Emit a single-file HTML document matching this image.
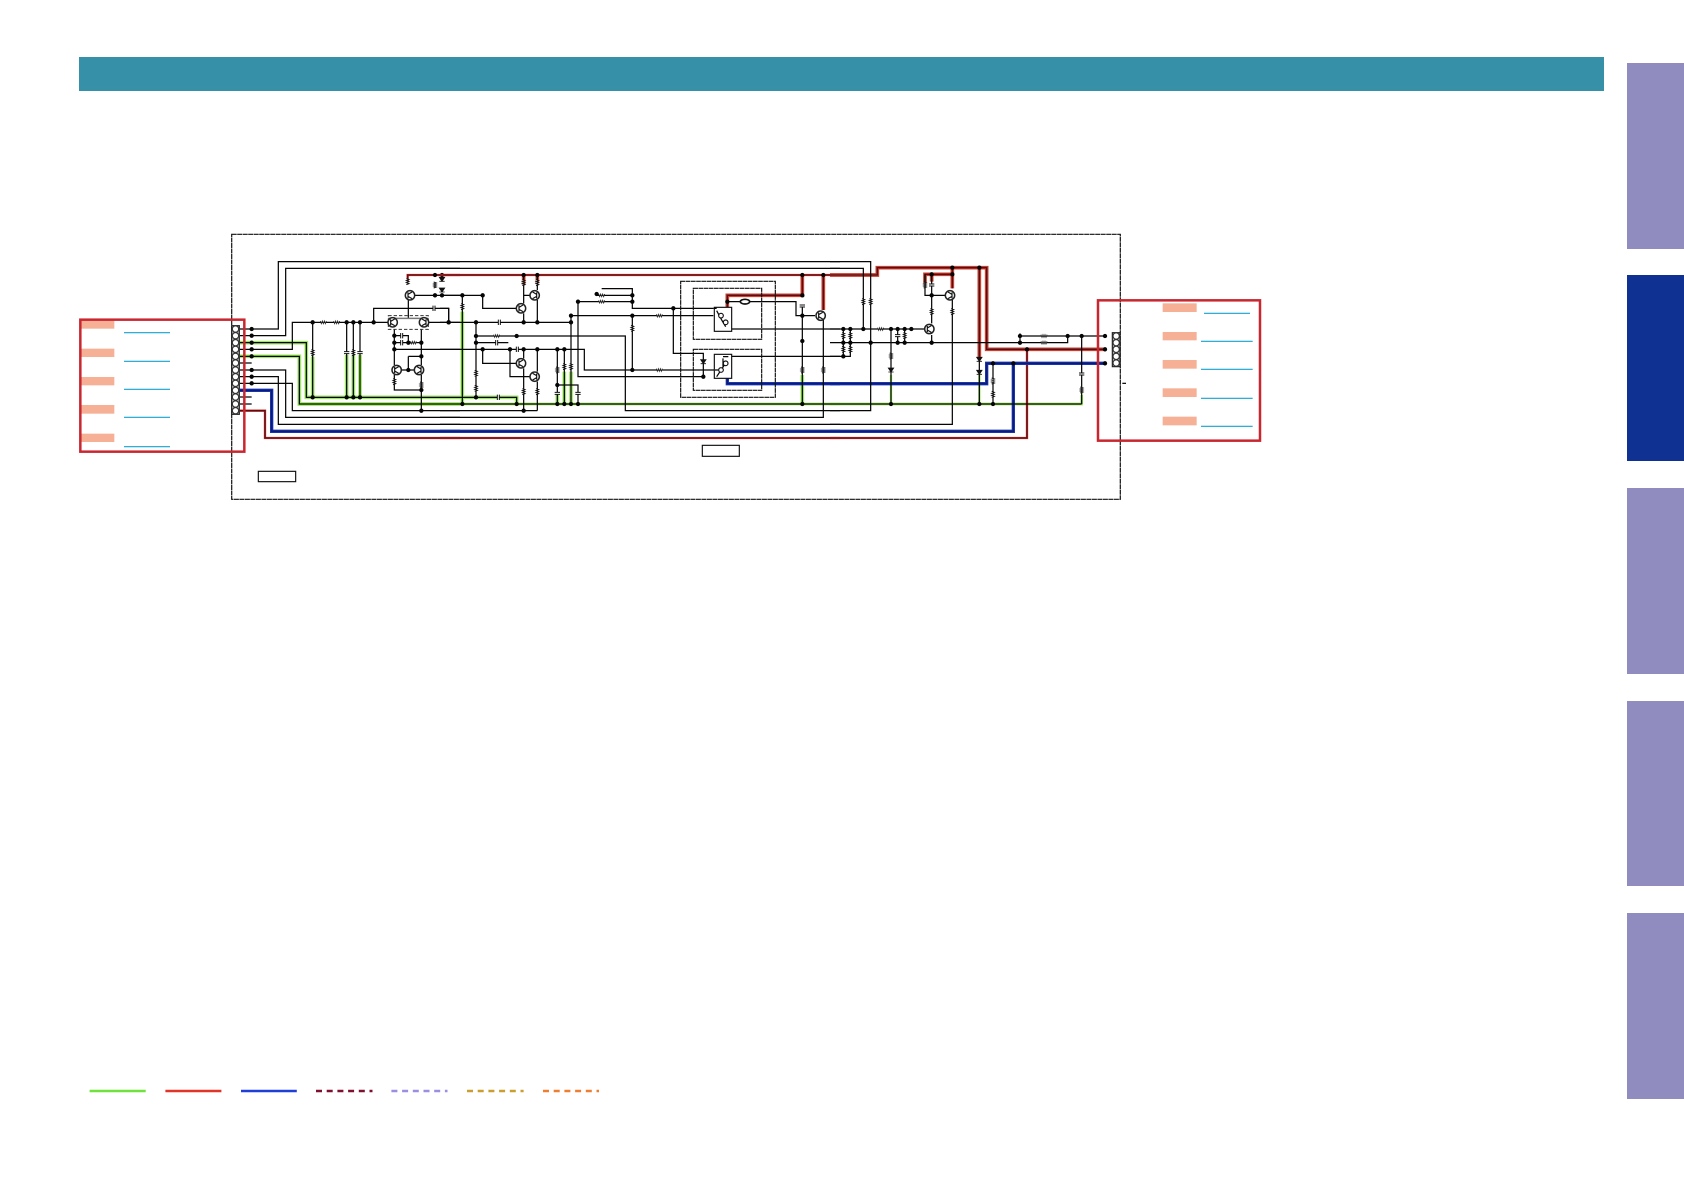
<!DOCTYPE html>
<html><head><meta charset="utf-8"><title>Schematic</title>
<style>
html,body{margin:0;padding:0;background:#fff}
body{width:1684px;height:1191px;overflow:hidden}
svg{display:block}
.k{fill:none;stroke:#050505;stroke-width:3.700}
.g{fill:none;stroke:#9be95f;stroke-width:11}
.gt{fill:none;stroke:#9be95f;stroke-width:8}
.r{fill:none;stroke:#cf3430;stroke-width:7}
.rt{fill:none;stroke:#c8402f;stroke-width:11}
.rc{fill:none;stroke:#5a0d12;stroke-width:4}
.b{fill:none;stroke:#1b38b8;stroke-width:10}
.bc{fill:none;stroke:#0a1c78;stroke-width:5}
.d{fill:none;stroke:#050505;stroke-width:13;stroke-linecap:round}
.sb{fill:none;stroke:#c9262f;stroke-width:7.500}
.sal{fill:#f5b096}
.ln{fill:none;stroke:#14a3cf;stroke-width:3.500}
</style></head>
<body>
<svg width="1684" height="1191" viewBox="0 0 1684 1191" xmlns="http://www.w3.org/2000/svg">
<defs>
<g id="t"><circle r="14" fill="#fff" stroke="#222" stroke-width="4.500"/><path d="M-6-9V9M-6-3 6-10M-6 3 6 10" fill="none" stroke="#111" stroke-width="3.500"/></g>
<path id="rv" d="M-4-9 4-6-4-3 4 0-4 3 4 6-4 9" fill="#fff" stroke="#111" stroke-width="3"/>
<path id="rh" d="M-9-4-6 4-3-4 0 4 3-4 6 4 9-4" fill="#fff" stroke="#222" stroke-width="2.500"/>
<g id="cv"><rect x="-8" y="-3" width="16" height="6" fill="#fff"/><path d="M-8-3H8M-8 3H8" stroke="#111" stroke-width="3"/></g>
<g id="ch"><rect x="-3" y="-8" width="6" height="16" fill="#fff"/><path d="M-3-8V8M3-8V8" stroke="#111" stroke-width="3"/></g>
<path id="dv" d="M-8-6H8L0 6ZM-8 6H8" fill="#111" stroke="#111" stroke-width="2.500"/>
<g id="s"><circle r="7" fill="#fff" stroke="#111" stroke-width="3.500"/></g>
</defs>

<rect x="79" y="57" width="1525" height="34" fill="#3690a8"/>
<rect x="1627" y="63" width="57" height="186" fill="#918cc0"/>
<rect x="1627" y="275" width="57" height="186" fill="#0f3191"/>
<rect x="1627" y="488" width="57" height="186" fill="#918cc0"/>
<rect x="1627" y="701" width="57" height="185" fill="#918cc0"/>
<rect x="1627" y="913" width="57" height="186" fill="#918cc0"/>

<rect x="231.700" y="234.300" width="888.600" height="265" fill="none" stroke="#111" stroke-width="1.200" stroke-dasharray="5 .5"/>

<!-- LEFT -->
<g transform="translate(60 220) scale(.33333)">
<path class="g" d="M540 368H739V532H1200M540 409H718V552H1200M758 410V532M860 405V532M880 405V532M900 405V532"/>
<path class="r" d="M540 572H615V654H1200M1043 185V165H1200"/>
<path class="rc" d="M540 572H615V654H1200M1043 185V165H1200"/>
<path class="b" d="M540 511H635V634H1200"/><path class="bc" d="M540 511H635V634H1200"/>
<path class="k" d="M540 327H655V125H1200M540 347H677V145H1200M540 368H739V532H1200M540 388H697V307H985M540 409H718V552H1200M540 429H575M540 450H677V592H1200M540 470H655V613H1200M540 490H697V572H1200M540 531H575M540 552H575M758 307V532M860 307V532M880 307V532M900 307V532M941 307V265H1166V307M1105 307H1200M1045 240V295M1003 327V435M1003 465V510H1084M1084 327V435M1084 465V572M1003 388H1200M1045 409H1084M1045 409V450M1022 450H1064M1003 347H1045V368M1003 368H1084M1065 226H1200"/>
<path d="M985 295H1105" stroke="#777" stroke-width="4.500"/>
<rect x="985" y="287" width="120" height="41" fill="none" stroke="#333" stroke-width="3" stroke-dasharray="10 6"/>
<path class="d" d="M575 327h0M575 347h0M575 368h0M575 388h0M575 409h0M575 450h0M575 470h0M575 490h0M758 307h0M860 307h0M880 307h0M900 307h0M941 307h0M1166 307h0M758 532h0M860 532h0M880 532h0M900 532h0M1125 165h0M1146 165h0M1125 226h0M1146 226h0M1003 347h0M1003 368h0M1003 388h0M1045 368h0M1084 368h0M1084 409h0M1045 450h0M1084 510h0M1084 572h0"/>
<use href="#rv" x="758" y="398"/><use href="#cv" x="860" y="398"/><use href="#rv" x="880" y="398"/><use href="#cv" x="900" y="398"/>
<use href="#rh" x="790" y="307"/><use href="#rh" x="830" y="307"/><use href="#ch" x="1122" y="265"/><use href="#ch" x="1025" y="347"/><use href="#ch" x="1025" y="368"/><use href="#rh" x="1060" y="368"/>
<use href="#rv" x="1125" y="195"/><use href="#dv" x="1146" y="178"/><use href="#dv" x="1146" y="210"/><use href="#rv" x="1043" y="185"/><use href="#rv" x="1003" y="485"/><use href="#rv" x="1084" y="495"/>
<use href="#t" x="1050" y="226"/><use href="#t" x="998" y="307"/><use href="#t" transform="translate(1092 307) scale(-1 1)"/><use href="#t" x="1010" y="450"/><use href="#t" transform="translate(1077 450) scale(-1 1)"/>
<rect x="515" y="317" width="23" height="266" fill="#bbb" stroke="#222" stroke-width="3.500"/>
<g fill="#fff" stroke="#333" stroke-width="3.500"><circle cx="526.500" cy="327" r="9.500"/><circle cx="526.500" cy="347" r="9.500"/><circle cx="526.500" cy="368" r="9.500"/><circle cx="526.500" cy="388" r="9.500"/><circle cx="526.500" cy="409" r="9.500"/><circle cx="526.500" cy="429" r="9.500"/><circle cx="526.500" cy="450" r="9.500"/><circle cx="526.500" cy="470" r="9.500"/><circle cx="526.500" cy="490" r="9.500"/><circle cx="526.500" cy="511" r="9.500"/><circle cx="526.500" cy="531" r="9.500"/><circle cx="526.500" cy="552" r="9.500"/><circle cx="526.500" cy="572" r="9.500"/></g>
<rect x="595" y="754" width="112" height="31" fill="#fff" stroke="#111" stroke-width="3.500"/>
<rect class="sal" x="62" y="300" width="101" height="26"/><rect class="sal" x="62" y="386" width="101" height="25"/><rect class="sal" x="62" y="471" width="101" height="25"/><rect class="sal" x="62" y="555" width="101" height="26"/><rect class="sal" x="62" y="641" width="101" height="25"/>
<path class="ln" d="M192 338H330M192 424H330M192 508H330M192 592H330M192 680H330"/>
<rect class="sb" x="61" y="299" width="492" height="396"/>
</g>

<!-- MIDDLE -->
<g transform="translate(440 220) scale(.33333)">
<path class="g" d="M67 275V552M0 532H230V552M393 455V552M373 455V552M352 525V552M1087 465V552"/>
<path class="gt" d="M0 552H1200"/>
<path class="r" d="M0 165H1200"/><path class="rc" d="M0 165H1200"/>
<path class="rt" d="M1087 165V226H862V262M1150 165V270M251 165V195M292 165V190"/><path class="rc" d="M1087 165V226H862V262M1150 165V270"/>
<path class="rc" d="M251 165V195M292 165V190"/>
<path class="b" d="M862 475V491H1200M0 634H1200"/><path class="bc" d="M862 475V491H1200M0 634H1200"/>
<path class="r" d="M0 654H1200"/><path class="rc" d="M0 654H1200"/>
<path class="k" d="M0 125H1200M0 145H1200M0 226H128M67 226V552M128 226V265H230M251 165V250M251 280V307M292 165V210M292 240V307M251 226H270M0 307H393M0 265H26V307M108 307V532M108 348H556V572H1200M108 368H205M0 388H433V450H825M128 388V430H230M210 388V470H270M251 388V415M251 445V572M292 388V455M292 485V572M0 572H292M0 592H1150V300M0 613H1200M0 532H230V552M0 552H1200M352 388V552M352 495H414V552M373 388V552M393 287V552M393 287H820M414 245V470H790M414 245H577M470 226H577M485 206H577V265H820M700 265V400H760H790V470M577 287V450M862 245H1068V287H1125M1087 255V552M875 327H1200M875 409H1200"/>
<rect x="722" y="184" width="284" height="348" fill="none" stroke="#111" stroke-width="3.500" stroke-dasharray="14 1.500"/>
<rect x="760" y="205" width="205" height="153" fill="none" stroke="#111" stroke-width="3.500" stroke-dasharray="14 1.500"/>
<rect x="760" y="388" width="205" height="123" fill="none" stroke="#111" stroke-width="3.500" stroke-dasharray="14 1.500"/>
<rect x="823" y="262" width="52" height="72" fill="#fff" stroke="#111" stroke-width="3.500"/>
<rect x="823" y="403" width="52" height="72" fill="#fff" stroke="#111" stroke-width="3.500"/>
<path class="k" d="M830 272 845 300 857 320M849 415V440M865 410H849M830 470 855 432M820 265H830M825 450H835"/>
<use href="#s" x="843" y="287"/><use href="#s" x="857" y="307"/><use href="#s" x="857" y="430"/><use href="#s" x="843" y="450"/>
<path class="d" d="M67 226h0M128 226h0M26 307h0M108 307h0M251 307h0M292 307h0M393 307h0M108 348h0M108 368h0M230 348h0M128 388h0M210 388h0M251 388h0M292 388h0M352 388h0M373 388h0M108 532h0M230 552h0M67 552h0M251 165h0M292 165h0M251 572h0M352 552h0M373 552h0M393 552h0M414 552h0M352 495h0M577 226h0M577 245h0M414 245h0M577 287h0M393 287h0M577 450h0M790 470h0M700 265h0M862 245h0M1087 165h0M1150 165h0M1087 226h0M1087 287h0M1087 363h0M1087 552h0M470 222h0"/>
<use href="#rv" x="67" y="260"/><use href="#rv" x="251" y="188"/><use href="#rv" x="292" y="188"/><use href="#ch" x="178" y="307"/><use href="#rh" x="170" y="348"/><use href="#ch" x="170" y="368"/><use href="#ch" x="232" y="388"/><use href="#ch" x="175" y="532"/><use href="#rv" x="108" y="460"/><use href="#rv" x="108" y="505"/><use href="#rv" x="251" y="515"/><use href="#rv" x="292" y="515"/><use href="#rv" x="352" y="450"/><use href="#cv" x="352" y="520"/><use href="#cv" x="414" y="520"/><use href="#rv" x="373" y="440"/><use href="#rv" x="393" y="440"/><use href="#rh" x="485" y="226"/><use href="#rh" x="485" y="245"/><use href="#rh" x="658" y="287"/><use href="#rh" x="658" y="450"/><use href="#rv" x="577" y="325"/><use href="#dv" x="790" y="425"/><use href="#cv" x="1087" y="258"/><use href="#rv" x="1087" y="450"/><use href="#rv" x="1150" y="450"/>
<ellipse cx="915" cy="245" rx="14" ry="7" fill="#fff" stroke="#111" stroke-width="5"/>
<use href="#t" x="243" y="265"/><use href="#t" transform="translate(284 226) scale(-1 1)"/><use href="#t" x="243" y="430"/><use href="#t" transform="translate(284 470) scale(-1 1)"/><use href="#t" x="1142" y="287"/>
<rect x="787" y="676" width="111" height="33" fill="#fff" stroke="#111" stroke-width="3.500"/>
</g>

<!-- RIGHT -->
<g transform="translate(830 220) scale(.33333)">
<path class="gt" d="M0 552H755V525"/>
<path class="g" d="M183 465V552M448 465V552" style="stroke-width:7"/>
<path class="rt" d="M0 165H142V143H470V388H825M448 143V415M367 143V205M285 190V163H367M305 163V185"/>
<path class="rc" d="M0 165H142V143H470V388H825M448 143V415M367 143V205M285 190V163H367M305 163V185"/>
<path class="r" d="M0 654H591V388"/><path class="rc" d="M0 654H591V388"/>
<path class="b" d="M0 491H470V430H825M0 634H550V430"/><path class="bc" d="M0 491H470V430H825M0 634H550V430"/>
<path class="k" d="M0 125H122V572H0M0 145H100V327M0 327H285M0 368H570M305 345V368M0 409H61V327M40 327V409M203 327V368M224 327V368M183 327V552M285 163V226H345M305 163V310M367 240V613H0M448 415V552M489 430V552M570 340V368M570 348H825M570 368H713V348M755 348V552M0 552H755"/>
<path class="d" d="M40 327h0M61 327h0M100 327h0M183 327h0M203 327h0M224 327h0M244 327h0M40 368h0M61 368h0M122 368h0M203 368h0M224 368h0M305 368h0M570 368h0M40 409h0M367 143h0M448 143h0M367 163h0M305 163h0M305 226h0M183 552h0M448 552h0M489 552h0M489 430h0M550 430h0M591 388h0M570 348h0M713 348h0M755 348h0M825 348h0M825 388h0M825 430h0"/>
<use href="#rv" x="100" y="245"/><use href="#rv" x="122" y="245"/><use href="#rv" x="40" y="347"/><use href="#rv" x="61" y="347"/><use href="#rv" x="40" y="388"/><use href="#rv" x="61" y="388"/><use href="#rh" x="152" y="327"/><use href="#cv" x="203" y="347"/><use href="#rv" x="224" y="347"/><use href="#rv" x="183" y="408"/><use href="#dv" x="183" y="450"/><use href="#rv" x="285" y="195"/><use href="#cv" x="305" y="195"/><use href="#rv" x="305" y="275"/><use href="#rv" x="367" y="275"/><use href="#dv" x="448" y="418"/><use href="#dv" x="448" y="457"/><use href="#rv" x="489" y="483"/><use href="#rv" x="489" y="523"/><use href="#rh" x="642" y="348"/><use href="#rh" x="642" y="368"/><use href="#cv" x="755" y="462"/><use href="#rv" x="755" y="510"/>
<use href="#t" transform="translate(360 226) scale(-1 1)"/><use href="#t" x="298" y="327"/>
<rect x="847" y="338" width="23" height="102" fill="#bbb" stroke="#222" stroke-width="3.500"/>
<g fill="#fff" stroke="#333" stroke-width="3.500"><circle cx="858.500" cy="348" r="9.500"/><circle cx="858.500" cy="368" r="9.500"/><circle cx="858.500" cy="388" r="9.500"/><circle cx="858.500" cy="409" r="9.500"/><circle cx="858.500" cy="429" r="9.500"/></g>
<path class="k" d="M877 490H888"/>
<rect class="sal" x="998" y="250" width="102" height="26"/><rect class="sal" x="998" y="336" width="102" height="25"/><rect class="sal" x="998" y="420" width="102" height="26"/><rect class="sal" x="998" y="505" width="102" height="26"/><rect class="sal" x="998" y="590" width="102" height="26"/>
<path class="ln" d="M1122 280H1260M1113 364H1268M1113 448H1268M1113 535H1268M1113 619H1268"/>
<rect class="sb" x="804" y="241" width="486" height="421"/>
</g>

<!-- LEGEND -->
<g fill="none" stroke-width="2.600">
<path d="M89.600 1091H145.700" stroke="#6fe33c"/>
<path d="M165.400 1091H221.400" stroke="#e03527"/>
<path d="M241 1091H296.800" stroke="#1f3fd8"/>
<path d="M316 1091H372.500" stroke="#7f1030" stroke-dasharray="6 4.700"/>
<path d="M391.400 1091H447.500" stroke="#9a8fe0" stroke-dasharray="6 4.700"/>
<path d="M467 1091H523.600" stroke="#c9a030" stroke-dasharray="6 4.700"/>
<path d="M543 1091H599" stroke="#ef7f30" stroke-dasharray="6 4.700"/>
</g>
</svg>
</body></html>
